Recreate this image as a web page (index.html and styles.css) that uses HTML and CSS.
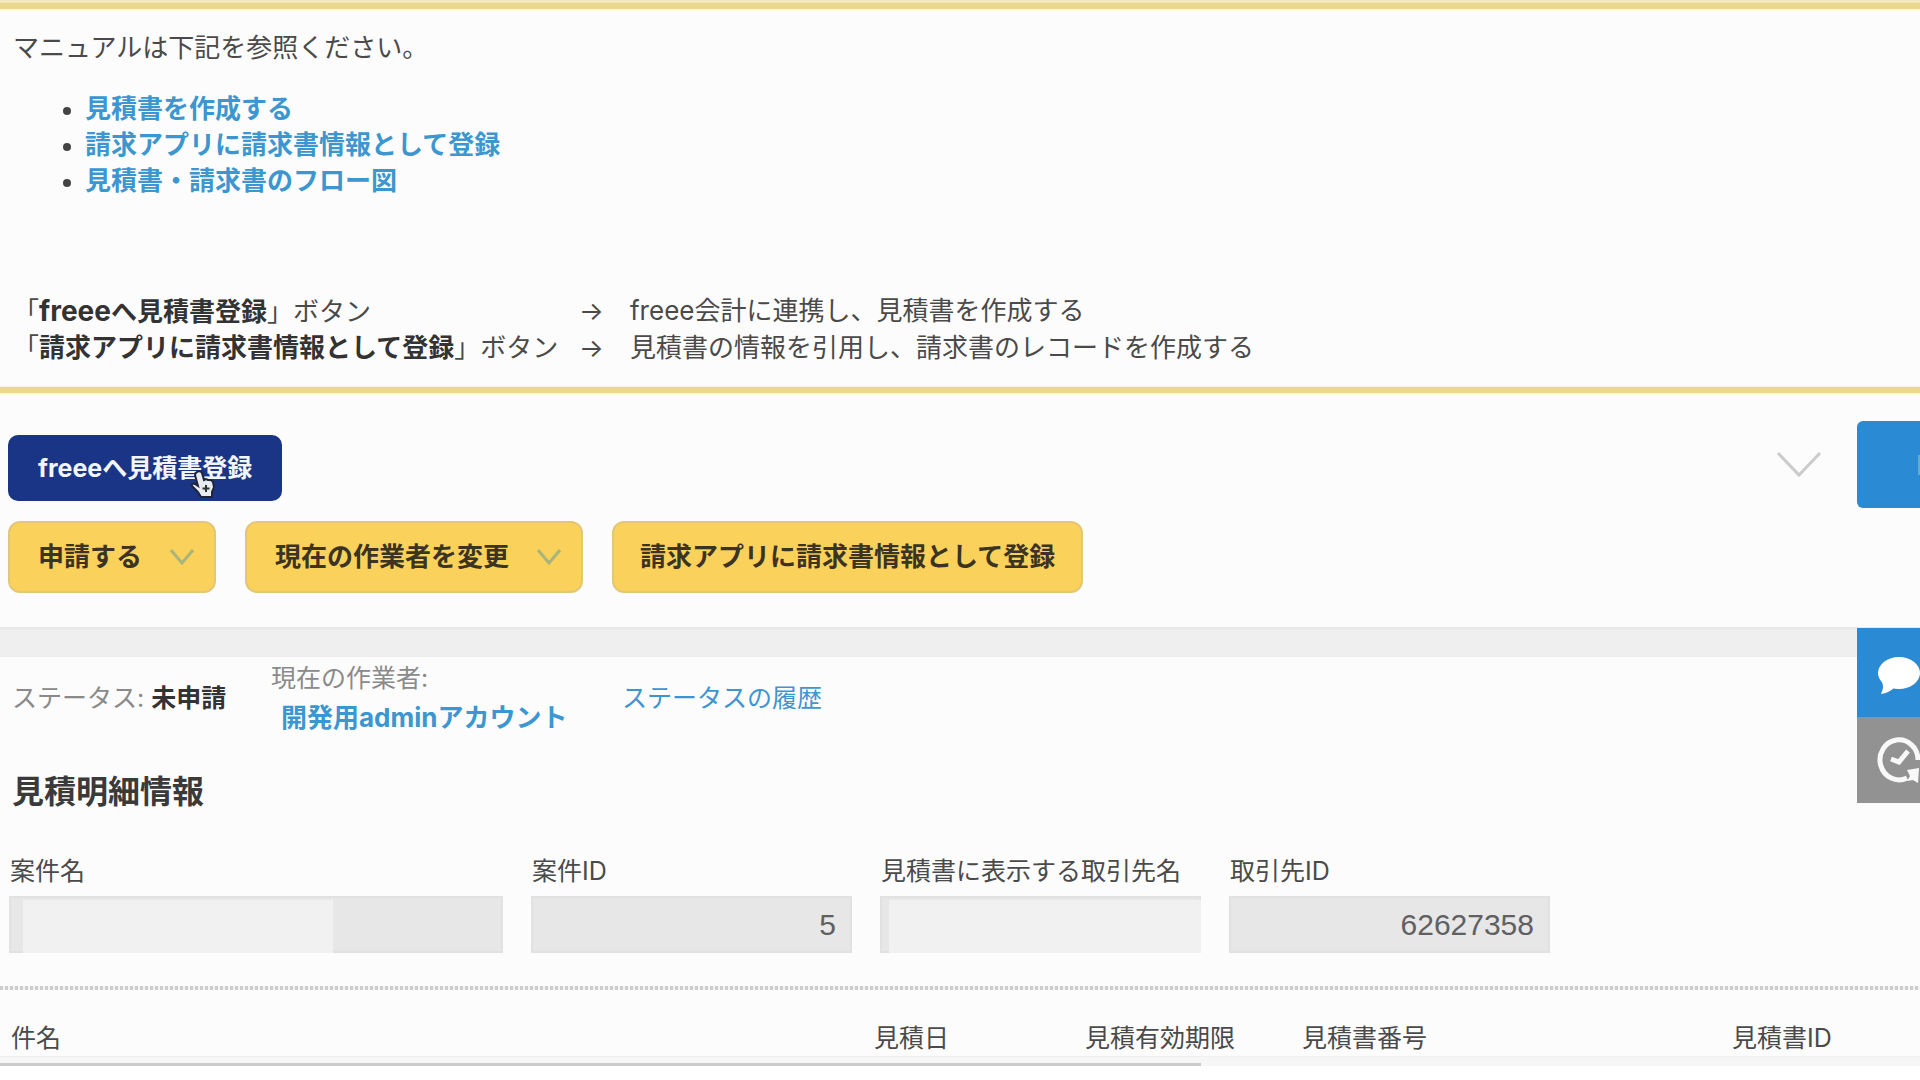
FILE: index.html
```html
<!DOCTYPE html>
<html lang="ja">
<head>
<meta charset="utf-8">
<title>見積書</title>
<link rel="stylesheet" href="styles.css">
</head>
<body>
<main class="page">
  <section class="manual">
    <p class="lead">マニュアルは下記を参照ください。</p>
    <ul class="manual-links">
      <li><a href="#create">見積書を作成する</a></li>
      <li><a href="#register">請求アプリに請求書情報として登録</a></li>
      <li><a href="#flow">見積書・請求書のフロー図</a></li>
    </ul>
    <div class="guide">
      <span>「<strong><span class="latin">freee</span>へ見積書登録</strong>」ボタン</span>
      <span>→</span>
      <span>freee会計に連携し、見積書を作成する</span>
      <span>「<strong>請求アプリに請求書情報として登録</strong>」ボタン</span>
      <span>→</span>
      <span>見積書の情報を引用し、請求書のレコードを作成する</span>
    </div>
  </section>

  <section class="actions">
    <div class="action-buttons">
      <div class="primary-wrap">
        <button class="btn btn-primary" type="button">freeeへ見積書登録</button>
        <svg class="cursor" width="26" height="30" viewBox="0 0 26 30" aria-hidden="true">
          <path d="M7 3q3-2 5 1l2 7 2-1 2 1 3 0 2 2 1 5-2 5v5H11l-3-5-6-6q-1-3 3-2l3 2-3-11q0-2 2-3z" fill="#e8ecf0" stroke="#1d2638" stroke-width="2"/>
          <path d="M16 16v7M12.500 19.500h7" stroke="#27332f" stroke-width="2" fill="none"/>
        </svg>
      </div>
      <div class="button-row">
        <button class="btn btn-status" type="button">申請する
          <svg class="caret" width="24" height="16" viewBox="0 0 24 16" aria-hidden="true"><path d="M1 1l11 13L23 1"/></svg>
        </button>
        <button class="btn btn-status" type="button">現在の作業者を変更
          <svg class="caret" width="24" height="16" viewBox="0 0 24 16" aria-hidden="true"><path d="M1 1l11 13L23 1"/></svg>
        </button>
        <button class="btn btn-status btn-plain" type="button">請求アプリに請求書情報として登録</button>
      </div>
    </div>
    <div class="record-tools">
      <button class="more" type="button" aria-label="その他">
        <svg width="46" height="28" viewBox="0 0 46 28"><path d="M2 2l21 22L44 2" fill="none" stroke="#cbcbcb" stroke-width="3"/></svg>
      </button>
      <button class="record-edit" type="button" aria-label="編集"><span class="edit-mark"></span></button>
    </div>
  </section>

  <div class="band"></div>

  <section class="status">
    <div class="state">ステータス: <strong>未申請</strong></div>
    <div class="worker">現在の作業者:<a href="#user">開発用adminアカウント</a></div>
    <a class="history" href="#history">ステータスの履歴</a>
  </section>

  <section class="detail">
    <h2>見積明細情報</h2>
    <div class="fields">
      <div class="field field-wide">
        <label for="case-name">案件名</label>
        <div class="box"><input id="case-name" type="text" readonly><span class="mask mask-part"></span></div>
      </div>
      <div class="field">
        <label for="case-id">案件ID</label>
        <div class="box"><input id="case-id" type="text" value="5" readonly></div>
      </div>
      <div class="field">
        <label for="client-name">見積書に表示する取引先名</label>
        <div class="box"><input id="client-name" type="text" readonly><span class="mask mask-full"></span></div>
      </div>
      <div class="field">
        <label for="client-id">取引先ID</label>
        <div class="box"><input id="client-id" type="text" value="62627358" readonly></div>
      </div>
    </div>
    <div class="rule"></div>
    <div class="columns">
      <span>件名</span><span>見積日</span><span>見積有効期限</span><span>見積書番号</span><span>見積書ID</span>
    </div>
    <div class="edge"><div class="edge-line"></div></div>
  </section>

  <aside class="side-tabs">
    <button class="tab tab-comment" type="button" aria-label="コメント">
      <svg width="63" height="89" viewBox="0 0 63 89"><ellipse cx="42" cy="45" rx="21" ry="16" fill="#fff"/><path d="M24 52q4 6 0 14 8-1 14-7z" fill="#fff"/></svg>
    </button>
    <button class="tab tab-history" type="button" aria-label="変更履歴">
      <svg width="63" height="86" viewBox="0 0 63 86"><path d="M61 43a19 20 0 1 0-11 18" fill="none" stroke="#f8f8f8" stroke-width="5"/><path d="M34 42l8 3L51 34" fill="none" stroke="#f8f8f8" stroke-width="5"/><path d="M50 53l12-2-1 15-5-3-6 1 3-5z" fill="#f8f8f8"/></svg>
    </button>
  </aside>
</main>
</body>
</html>
```
FILE: styles.css
```css
* { box-sizing: border-box; }

body {
  margin: 0;
  background: #fff;
  color: #4a4a4a;
  font-family: Inter, "Noto Sans CJK JP", sans-serif;
  font-size: 25px;
  line-height: 36px;
}

button, input { font: inherit; }
button { border: 0; cursor: pointer; }
a { color: #3c96d0; text-decoration: none; }

.page {
  display: flow-root;
  position: relative;
  background: #fcfcfc;
  overflow: hidden;
}

/* Manual notice */
.manual {
  margin-top: 3px;
  padding: 21px 13px;
  border-top: 6px solid #ecd78e;
  border-bottom: 6px solid #ecd78e;
  box-shadow: 0 -3px #f4e8bd, inset 0 2px #fdf7dc, inset 0 -2px #fdf7dc, 0 2px #fdf7dc;
  font-size: 26px;
  white-space: nowrap;
}

.lead { margin: 0 0 25px; }

.manual-links {
  margin: 0 0 94px;
  padding-left: 72px;
  font-weight: 700;
}

.manual-links li { list-style: none; position: relative; }

.manual-links li::before {
  content: "";
  position: absolute;
  left: -22px;
  top: 16px;
  width: 8px;
  height: 8px;
  border-radius: 50%;
  background: #444;
}

.guide {
  display: grid;
  grid-template-columns: 566px 51px auto;
  justify-content: start;
}

.guide strong { color: #333; }
.latin { font-size: 28px; }

/* Action bar */
.actions {
  display: flex;
  justify-content: space-between;
  padding-left: 8px;
}

.action-buttons {
  display: flex;
  flex-direction: column;
  align-items: flex-start;
  gap: 20px;
  padding: 42px 0 34px;
}

.primary-wrap { position: relative; }

.cursor {
  position: absolute;
  left: 182px;
  top: 34px;
  pointer-events: none;
}

.btn {
  display: flex;
  align-items: center;
  font-weight: 700;
  white-space: nowrap;
}

.btn-primary {
  height: 66px;
  padding: 0 30px;
  border-radius: 10px;
  background: #1a3585;
  color: #f2f5fa;
}

.button-row { display: flex; gap: 29px; }

.btn-status {
  gap: 28px;
  height: 72px;
  padding: 0 20px 0 28px;
  border: 2px solid #e2c778;
  border-radius: 12px;
  background: #fad15a;
  color: #3b3422;
  font-size: 26px;
}

.btn-plain { padding: 0 26px; }

.caret {
  fill: none;
  stroke: #a9b57a;
  stroke-width: 3;
}

.record-tools { display: flex; padding-top: 28px; }

.more {
  height: 87px;
  padding: 0 35px 0 0;
  background: none;
}

.more svg { display: block; }

.record-edit {
  display: flex;
  align-items: center;
  justify-content: flex-end;
  width: 63px;
  height: 87px;
  padding: 0;
  border-radius: 6px 0 0 6px;
  background: #2a8bd4;
}

.edit-mark { width: 2px; height: 20px; background: #6aa9c9; }

.band {
  height: 30px;
  border-top: 3px solid #e9e9e9;
  background: #efefef;
}

/* Status line */
.status {
  display: flex;
  align-items: center;
  padding: 1px 12px 0;
  line-height: 40px;
  color: #8a8a8a;
  white-space: nowrap;
}

.state { width: 259px; }
.state strong { color: #333; }

.worker { width: 351px; }
.worker a { display: block; padding-left: 10px; font-weight: 700; font-size: 26px; }

/* Detail fields */
h2 {
  margin: 34px 0 41px;
  padding-left: 12px;
  font-size: 32px;
  line-height: 40px;
  color: #3a3a3a;
}

.fields { display: flex; gap: 28px; padding-left: 9px; }
.field { width: 321px; }
.field-wide { width: 494px; }
.field label { display: block; margin-bottom: 7px; padding-left: 1px; white-space: nowrap; }

.box { position: relative; }

.box input {
  display: block;
  width: 100%;
  height: 57px;
  padding: 0 14px;
  border: 2px solid #e1e1e1;
  border-radius: 0;
  background: #e7e7e7;
  color: #606060;
  font-family: "Liberation Sans", sans-serif;
  font-size: 30px;
  text-align: right;
}

.mask {
  position: absolute;
  top: 4px;
  bottom: 0;
  background: #f1f1f1;
}

.mask-part { left: 14px; width: 310px; }
.mask-full { left: 9px; right: 0; }

.rule {
  height: 4px;
  margin: 33px 0 30px;
  background: repeating-linear-gradient(90deg, #cdcdcd 0 3px, #f4f4f4 3px 5px);
}

.columns {
  display: grid;
  grid-template-columns: 863px 211px 217px 430px auto;
  justify-content: start;
  padding-left: 11px;
  white-space: nowrap;
}

.edge {
  display: flex;
  align-items: flex-end;
  height: 10px;
  border-top: 1px solid #f0f0f0;
  background: #f6f6f6;
}

.edge-line { width: 1201px; height: 3px; background: #cbcbcb; }

/* Side tabs over the right edge */
.side-tabs {
  position: absolute;
  top: 628px;
  right: 0;
  width: 63px;
}

.tab { display: block; width: 63px; padding: 0; }
.tab svg { display: block; }
.tab-comment { background: #2a8bd4; }
.tab-history { background: #929292; }
```
